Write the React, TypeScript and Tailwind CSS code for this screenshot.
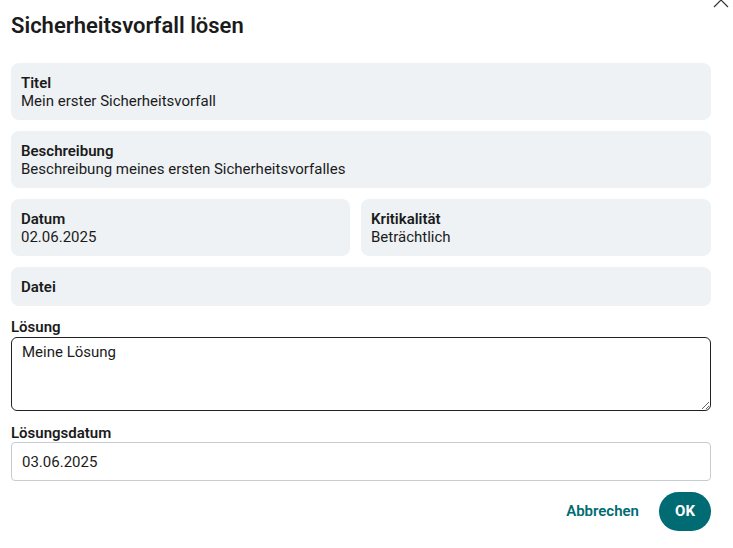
import React, { useState } from "react";

const InfoCard = ({ label, value, className = "" }: { label: string; value?: string; className?: string }) => (
  <div className={`rounded-[8px] bg-[#eef2f5] px-[10px] pt-[11px] pb-[10px] text-[15px] leading-[18px] text-[#1b1b1b] ${className}`}>
    <div className="font-semibold">{label}</div>
    {value && <div>{value}</div>}
  </div>
);

const App = () => {
  const [solution, setSolution] = useState("Meine Lösung");
  const [date, setDate] = useState("03.06.2025");

  return (
    <div className="relative h-[548px] w-[733px] overflow-hidden bg-white pl-[11px] pr-[22px] font-['Roboto','Liberation_Sans',sans-serif] text-[#1b1b1b]">
      <button className="absolute right-[4px] top-[-8px] h-[16px] w-[16px] text-[#333]" aria-label="Schließen">
        <svg viewBox="0 0 16 16" className="h-[16px] w-[16px]" fill="none" stroke="currentColor" strokeWidth="1.2">
          <path d="M1 1 L15 15 M15 1 L1 15" />
        </svg>
      </button>

      <h1 className="pt-[12px] text-[22px] font-semibold leading-[28px]">Sicherheitsvorfall lösen</h1>

      <div className="mt-[23px] flex flex-col gap-[11px]">
        <InfoCard label="Titel" value="Mein erster Sicherheitsvorfall" />
        <InfoCard label="Beschreibung" value="Beschreibung meines ersten Sicherheitsvorfalles" />
        <div className="grid grid-cols-[339px_1fr] gap-[11px]">
          <InfoCard label="Datum" value="02.06.2025" />
          <InfoCard label="Kritikalität" value="Beträchtlich" />
        </div>
        <InfoCard label="Datei" />
      </div>

      <div className="mt-[12px] flex flex-col">
        <label className="text-[15px] font-semibold leading-[18px]">Lösung</label>
        <textarea
          value={solution}
          onChange={(e) => setSolution(e.target.value)}
          className="mt-[1px] h-[74px] w-full rounded-[6px] border border-[#222] px-[10px] pt-[5px] text-[15px] leading-[18px] outline-none"
        />
      </div>

      <div className="mt-[13px] flex flex-col">
        <label className="text-[15px] font-semibold leading-[18px]">Lösungsdatum</label>
        <input
          value={date}
          onChange={(e) => setDate(e.target.value)}
          className="h-[39px] w-full rounded-[4px] border border-[#c5cdd1] px-[10px] text-[15px] outline-none"
        />
      </div>

      <div className="mt-[11px] flex items-center justify-end gap-[20px]">
        <button className="text-[15px] font-semibold text-[#006b73]">Abbrechen</button>
        <button className="h-[39px] w-[52px] rounded-full bg-[#006b73] text-[15px] font-bold text-white">OK</button>
      </div>
    </div>
  );
};

export default App;
